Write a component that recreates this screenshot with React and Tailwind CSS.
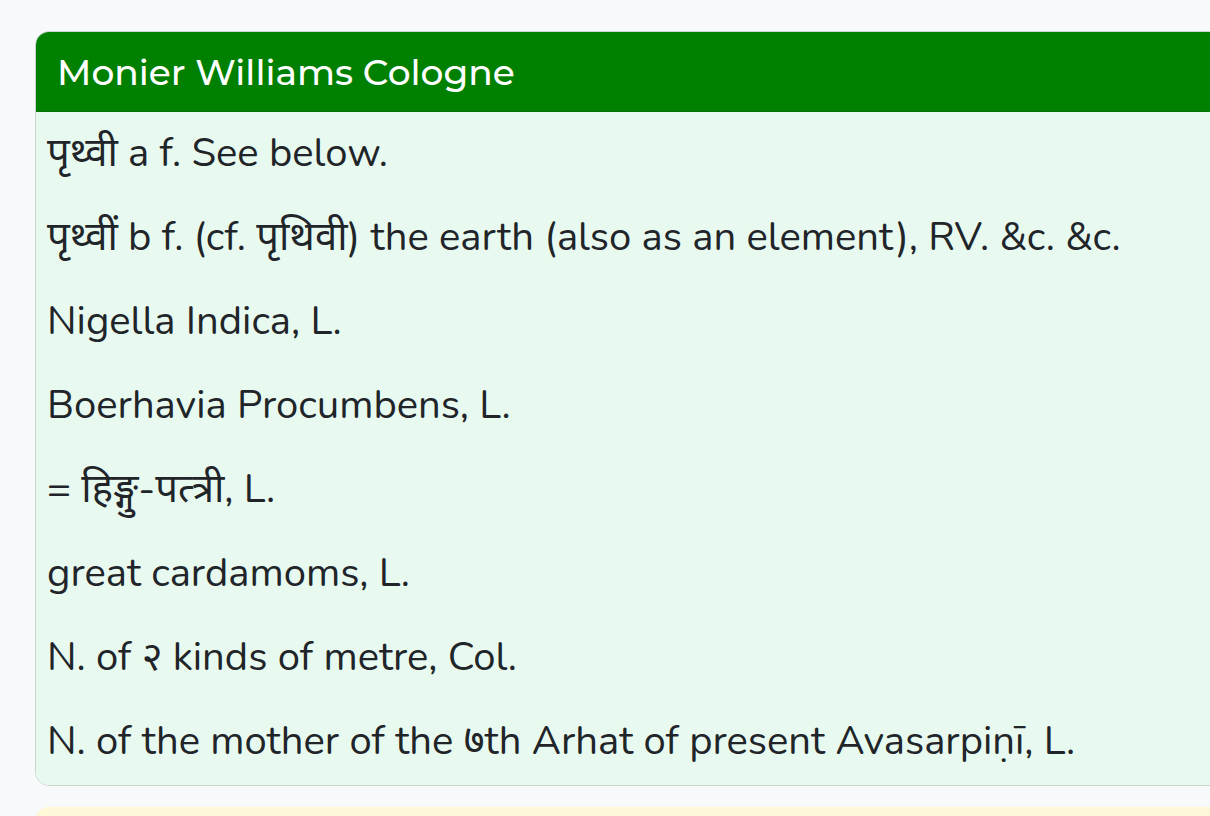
import React from "react";

const lines = [
    "पृथ्वी a f. See below.",
    "पृथ्वीं b f. (cf. पृथिवी) the earth (also as an element), RV. &c. &c.",
    "Nigella Indica, L.",
    "Boerhavia Procumbens, L.",
    "= हिङ्गु-पत्त्री, L.",
    "great cardamoms, L.",
    "N. of २ kinds of metre, Col.",
    "N. of the mother of the ७th Arhat of present Avasarpiṇī, L.",
];

const App = () => {
    return (
        <div className="h-[816px] w-[1210px] overflow-hidden bg-[#f8f9fa] pt-[31px] pl-[35px]">
            <div className="w-[1220px] rounded-[14px] border border-[#c9d6cf] overflow-hidden">
                <div className="bg-[#008000] h-[80px] flex items-center px-[21px] border-b border-[#0a6f0a]">
                    <h2 className="text-white text-[36px] font-medium" style={{ fontFamily: "Montserrat, 'Noto Sans', sans-serif" }}>
                        Monier Williams Cologne
                    </h2>
                </div>
                <div className="bg-[#e8faf0] pt-[11px] pb-[14px] px-[11px] flex flex-col gap-[24px]">
                    {lines.map((t, i) => (
                        <p key={i} className="text-[40px] leading-[60px] text-[#212529]" style={{ fontFamily: "Nunito, 'Noto Sans', 'Noto Sans Devanagari', sans-serif" }}>
                            {t}
                        </p>
                    ))}
                </div>
            </div>
            <div className="mt-[21px] w-[1220px] h-[40px] rounded-t-[14px] bg-[#fff8d8]"></div>
        </div>
    );
};

export default App;
